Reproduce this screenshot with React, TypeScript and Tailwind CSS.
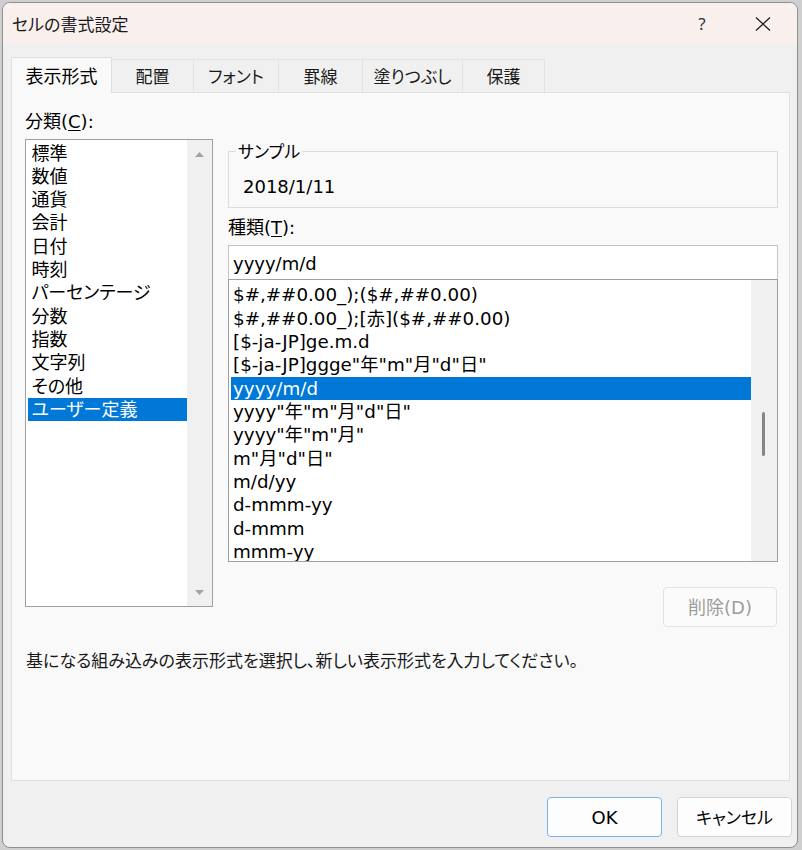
import React from "react";

// --- Data ---
const categories = [
  "標準",
  "数値",
  "通貨",
  "会計",
  "日付",
  "時刻",
  "パーセンテージ",
  "分数",
  "指数",
  "文字列",
  "その他",
  "ユーザー定義",
];

const formats = [
  "$#,##0.00_);($#,##0.00)",
  "$#,##0.00_);[赤]($#,##0.00)",
  "[$-ja-JP]ge.m.d",
  '[$-ja-JP]ggge"年"m"月"d"日"',
  "yyyy/m/d",
  'yyyy"年"m"月"d"日"',
  'yyyy"年"m"月"',
  'm"月"d"日"',
  "m/d/yy",
  "d-mmm-yy",
  "d-mmm",
  "mmm-yy",
];

const tabs = [
  { label: "表示形式", w: "w-[101px]" },
  { label: "配置", w: "w-[82px]" },
  { label: "フォント", w: "w-[85px]" },
  { label: "罫線", w: "w-[84px]" },
  { label: "塗りつぶし", w: "w-[100px]" },
  { label: "保護", w: "w-[82px]" },
];

function CloseIcon() {
  return (
    <svg width="16" height="16" viewBox="0 0 16 16" className="text-[#1b1b1b]">
      <path d="M1 1.5 L15 14.5 M15 1.5 L1 14.5" stroke="currentColor" strokeWidth="1.2" fill="none" />
    </svg>
  );
}

function Arrow({ up }: { up?: boolean }) {
  return (
    <svg width="9" height="5" viewBox="0 0 9 5">
      <path d={up ? "M0 5 L4.5 0 L9 5 Z" : "M0 0 L4.5 5 L9 0 Z"} fill="#a3a3a3" />
    </svg>
  );
}

export default function App() {
  const selectedCategory = 11;
  const selectedFormat = 4;

  return (
    <div className="w-[802px] h-[850px] bg-[#cfcfcf] pt-[2px] pl-[2px] font-['DejaVu_Sans','Noto_Sans_CJK_JP',sans-serif] [font-feature-settings:'palt'] text-[18px] text-black">
      <div className="w-[796px] h-[846px] rounded-[8px] border border-[#8f8f8f] bg-[#f0f0f0] overflow-hidden flex flex-col">
        {/* title bar */}
        <div className="h-[41px] bg-[#f9f0ee] flex items-center pl-[9px] shrink-0">
          <div className="text-[17px] font-['Noto_Sans_CJK_JP',sans-serif] text-[#1a1a1a]">セルの書式設定</div>
          <div className="ml-auto w-[30px] text-center text-[17px] font-['Noto_Sans',sans-serif] text-[#333] mr-[38px]">?</div>
          <div className="w-[16px] h-[16px] mr-[26px] flex items-center justify-center">
            <CloseIcon />
          </div>
        </div>

        {/* tabs */}
        <div className="flex items-end mt-[13px] ml-[8px] shrink-0">
          {tabs.map((t, i) =>
            i === 0 ? (
              <div
                key={t.label}
                className={`${t.w} h-[36px] -mb-px relative z-10 bg-[#f9f9f9] border-l border-t border-r border-[#dedede] flex items-center justify-center font-['Noto_Sans_CJK_JP',sans-serif]`}
              >
                {t.label}
              </div>
            ) : (
              <div
                key={t.label}
                className={`${t.w} h-[33px] bg-[#f0f0f0] border-t border-r border-[#e2e2e2] flex items-center justify-center text-[17px] font-['Noto_Sans_CJK_JP',sans-serif] text-[#1a1a1a]`}
              >
                {t.label}
              </div>
            )
          )}
        </div>

        {/* tab panel */}
        <div className="ml-[8px] w-[779px] h-[689px] border border-[#dedede] bg-[#f9f9f9] pt-[17px] shrink-0">
          <div className="flex pl-[13px]">
            {/* category column */}
            <div className="w-[188px]">
              <div className="h-[24px] leading-[24px]">
                分類(<span className="underline underline-offset-2">C</span>):
              </div>
              <div className="mt-[5px] h-[468px] border border-[#a0a0a0] bg-white flex">
                <div className="flex-1 pt-[1.5px] pl-[2px]">
                  {categories.map((c, i) => (
                    <div
                      key={c}
                      className={`h-[23.33px] leading-[23.33px] pl-[3.5px] ${
                        i === selectedCategory ? "bg-[#0078d7] text-white" : ""
                      }`}
                    >
                      {c}
                    </div>
                  ))}
                </div>
                <div className="w-[25px] bg-[#f0f0f0] flex flex-col items-center justify-between pt-[12px] pb-[11px]">
                  <Arrow up />
                  <Arrow />
                </div>
              </div>
            </div>

            {/* type column */}
            <div className="ml-[15px] w-[550px]">
              <fieldset className="mt-[29px] h-[69px] border border-[#dcdcdc]">
                <legend className="ml-[7px] px-[2px] leading-[24px] font-['Noto_Sans_CJK_JP',sans-serif] text-[17px]">サンプル</legend>
                <div className="pt-[12px] pl-[14px] leading-[24px]">2018/1/11</div>
              </fieldset>

              <div className="mt-[8px] h-[24px] leading-[24px]">
                種類(<span className="underline underline-offset-2">T</span>):
              </div>
              <div className="mt-[5px] h-[34px] border-t border-l border-r border-[#c4c4c4] bg-white flex items-center pl-[4px] pt-[1px]">
                yyyy/m/d
              </div>
              <div className="h-[283px] border border-[#a0a0a0] bg-white flex overflow-hidden">
                <div className="flex-1 pt-[3.3px] pl-[2px] overflow-hidden">
                  {formats.map((f, i) => (
                    <div
                      key={f}
                      className={`h-[23.33px] leading-[23.33px] pl-[2px] whitespace-nowrap text-[18.3px] ${
                        i === selectedFormat ? "bg-[#0078d7] text-white" : ""
                      }`}
                    >
                      {f}
                    </div>
                  ))}
                </div>
                <div className="w-[26px] bg-[#f0f0f0] pt-[132px] pl-[11px] shrink-0">
                  <div className="w-[3px] h-[44px] rounded-full bg-[#858585]" />
                </div>
              </div>

              <div className="flex justify-end mt-[25px] pr-[1px]">
                <div className="w-[114px] h-[40px] rounded-[4px] border border-[#e3e3e3] bg-[#fbfbfb] text-[#9d9d9d] flex items-center justify-center">
                  削除(D)
                </div>
              </div>
            </div>
          </div>

          <div className="mt-[22px] pl-[14px] leading-[24px] text-[17px] text-[#1a1a1a]">
            基になる組み込みの表示形式を選択し、新しい表示形式を入力してください。
          </div>
        </div>

        {/* dialog buttons */}
        <div className="flex justify-end gap-[15px] mt-[16px] pr-[5px]">
          <div className="w-[115px] h-[40px] rounded-[4px] border border-[#7cb3e6] bg-[#fdfdfd] flex items-center justify-center">
            OK
          </div>
          <div className="w-[115px] h-[40px] rounded-[4px] border border-[#d4d4d4] bg-[#fdfdfd] flex items-center justify-center font-['Noto_Sans_CJK_JP',sans-serif] text-[17px]">
            キャンセル
          </div>
        </div>
      </div>
    </div>
  );
}
